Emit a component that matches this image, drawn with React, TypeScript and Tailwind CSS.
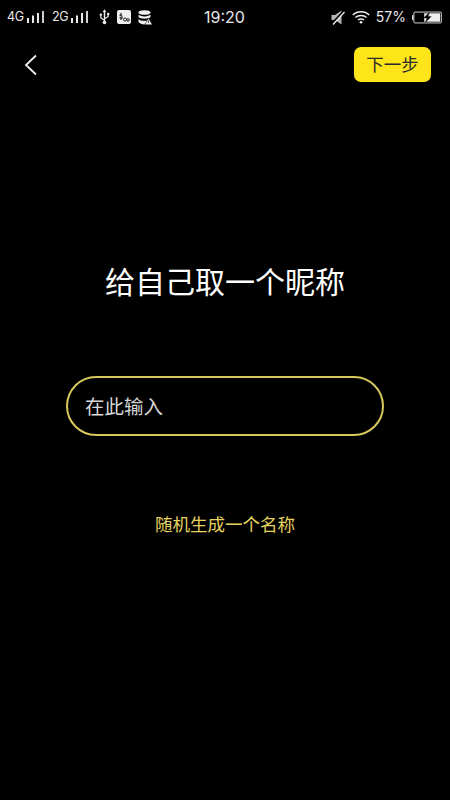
const CJK = "font-['Noto_Sans_CJK_SC','Noto_Sans',sans-serif]";

function Bars() {
  return (
    <svg width="17" height="12" viewBox="0 0 17 12" className="block">
      <rect x="0" y="7" width="2" height="5" fill="#e8e8e8" />
      <rect x="5" y="4.5" width="2" height="7.5" fill="#e8e8e8" />
      <rect x="10" y="2" width="2" height="10" fill="#e8e8e8" />
      <rect x="15" y="0" width="2" height="12" fill="#cfcfcf" />
    </svg>
  );
}

function Usb() {
  return (
    <svg width="11" height="18" viewBox="0 0 12 18" className="block">
      <path d="M6 0.5 L8 3.5 H6.8 V14 H5.2 V3.5 H4 Z" fill="#eee" />
      <circle cx="6" cy="15" r="2" fill="#eee" />
      <path d="M6 11 L10 8.5 V6.5 M6 12.5 L2 10 V7.5" stroke="#eee" strokeWidth="1.3" fill="none" />
      <rect x="8.8" y="4.5" width="2.4" height="2.4" fill="#eee" />
      <circle cx="2" cy="6.5" r="1.3" fill="#eee" />
    </svg>
  );
}

function AppBadge() {
  return (
    <svg width="14" height="14" viewBox="0 0 14 14" className="block">
      <rect x="0" y="0" width="14" height="14" rx="2" fill="#eee" />
      <path d="M4 3 V10 M2.5 5 L5.5 6.5 M2.5 7.5 L6 8" stroke="#222" strokeWidth="1.2" fill="none" />
      <circle cx="8" cy="9.5" r="1.5" stroke="#222" fill="none" />
      <circle cx="11" cy="10" r="1.3" stroke="#222" fill="none" />
    </svg>
  );
}

function Database() {
  return (
    <svg width="14" height="15" viewBox="0 0 14 15" className="block">
      <ellipse cx="6.5" cy="2.5" rx="6" ry="2.3" fill="#eee" />
      <path d="M0.5 4.6 C2 7 11 7 12.5 4.6 V7 C11 9.2 2 9.2 0.5 7 Z" fill="#eee" />
      <path d="M0.5 9 C2 11 7 11.2 9 10.5 L6.5 14.5 C4 14.5 1.5 13.5 0.5 12 Z" fill="#eee" />
      <path d="M10.5 8.5 L14 14.5 H7 Z" fill="#eee" />
      <rect x="10.1" y="10.5" width="0.9" height="2.2" fill="#222" />
    </svg>
  );
}

function Muted() {
  return (
    <svg width="14" height="15" viewBox="0 0 14 15" className="block">
      <path d="M0.5 5 H4 L10.5 0.5 V14.5 L4 10 H0.5 Z" fill="#b5b5b5" />
      <path d="M0.5 14.5 L13.5 0.5" stroke="#000" strokeWidth="2.4" />
      <path d="M2 14.5 L13.5 2" stroke="#eee" strokeWidth="1.3" />
    </svg>
  );
}

function Wifi() {
  return (
    <svg width="19" height="14" viewBox="0 0 20 14" className="block">
      <path d="M0.8 4.8 C5.5 0.3 13.5 0.3 18.2 4.8" stroke="#eee" strokeWidth="1.5" fill="none" />
      <path d="M3.6 7.6 C7 4.6 12 4.6 15.4 7.6" stroke="#eee" strokeWidth="1.5" fill="none" />
      <path d="M6.4 10.2 C8.4 8.7 10.6 8.7 12.6 10.2" stroke="#eee" strokeWidth="1.5" fill="none" />
      <circle cx="9.5" cy="12.5" r="1.4" fill="#eee" />
    </svg>
  );
}

function Battery() {
  return (
    <svg width="30" height="13" viewBox="0 0 32 13" className="block">
      <rect x="0" y="4" width="1.5" height="5" fill="#ddd" />
      <rect x="2" y="0.7" width="29.3" height="11.6" rx="1" stroke="#ddd" strokeWidth="1" fill="none" />
      <rect x="13" y="2" width="17" height="9" fill="#eee" />
      <path d="M18 1.5 L12.5 7 H16 L14.5 11.5 L20.5 5.5 H17 L18.5 1.5 Z" fill="#000" stroke="#000" strokeWidth="0.4" />
    </svg>
  );
}

export default function App() {
  return (
    <div className={`${CJK} w-[450px] h-[800px] bg-black flex flex-col overflow-hidden`}>
      <div className="h-8 pt-[2px] flex items-center justify-between pl-[7px] pr-[8px] text-[#e8e8e8] font-['Inter','Noto_Sans',sans-serif]">
        <div className="flex-1 flex items-center">
          <span className="w-[16px] text-[12.5px] tracking-[-0.3px] leading-none">4G</span>
          <span className="ml-[4px]"><Bars /></span>
          <span className="ml-[8px] w-[15px] text-[12.5px] tracking-[-0.3px] leading-none">2G</span>
          <span className="ml-[4px]"><Bars /></span>
          <span className="ml-[11px]"><Usb /></span>
          <span className="ml-[7px]"><AppBadge /></span>
          <span className="ml-[7px]"><Database /></span>
        </div>
        <span className="text-[16px] leading-none">19:20</span>
        <div className="flex-1 flex items-center justify-end">
          <Muted />
          <span className="ml-[7px]"><Wifi /></span>
          <span className="ml-[5px] text-[14px] leading-none">57%</span>
          <span className="ml-[6px]"><Battery /></span>
        </div>
      </div>

      <div className="h-[66px] flex items-center justify-between pl-[24px] pr-[19px]">
        <svg width="14" height="22" viewBox="0 0 14 22" className="block">
          <path d="M12 1.5 L2 11 L12 20.5" stroke="#f0f0f0" strokeWidth="1.8" fill="none" />
        </svg>
        <button className="w-[77px] h-[35px] -translate-y-px rounded-[7px] bg-[#fde51a] text-[#2a2a2a] text-[17.5px] leading-none flex items-center justify-center">
          下一步
        </button>
      </div>

      <h1 className="mt-[158px] text-center text-white text-[30px] leading-[48px] font-normal">给自己取一个昵称</h1>

      <div className="mt-[72px] mx-[66px] h-[60px] rounded-[30px] border-2 border-[#d9c95c] flex items-center px-[17px]">
        <input
          placeholder="在此输入"
          className="w-full bg-transparent outline-none text-[19.5px] text-white placeholder:text-[#d6d6d6]"
        />
      </div>

      <p className="mt-[75px] text-center text-[#e6d35f] text-[17.5px] leading-[26px]">随机生成一个名称</p>
    </div>
  );
}
